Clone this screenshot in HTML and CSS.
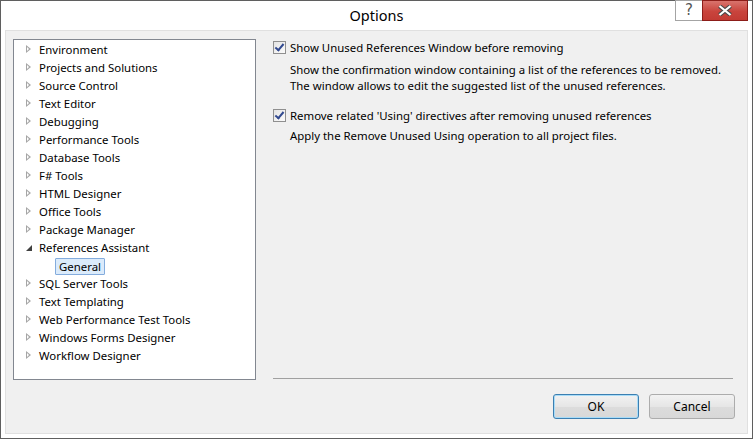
FILE: index.html
```html
<!DOCTYPE html>
<html>
<head>
<meta charset="utf-8">
<link rel="stylesheet" href="styles.css">
</head>
<body>
<div class="window">
  <div class="titlebar">
    <div></div>
    <div class="title">Options</div>
    <div class="controls">
      <div class="ctl help"><span>?</span></div>
      <div class="ctl close">
        <svg width="14" height="11" viewBox="0 0 14 11"><path d="M1.5 1 L12.5 10 M12.5 1 L1.5 10" stroke="#4a4a4a" stroke-width="4.2" fill="none"/><path d="M1.5 1 L12.5 10 M12.5 1 L1.5 10" stroke="#fff" stroke-width="2.2" fill="none"/></svg>
      </div>
    </div>
  </div>
  <div class="content">
    <div class="main">
      <div class="tree">
        <div class="row"><span class="arrow closed"></span><span class="label">Environment</span></div>
        <div class="row"><span class="arrow closed"></span><span class="label">Projects and Solutions</span></div>
        <div class="row"><span class="arrow closed"></span><span class="label">Source Control</span></div>
        <div class="row"><span class="arrow closed"></span><span class="label">Text Editor</span></div>
        <div class="row"><span class="arrow closed"></span><span class="label">Debugging</span></div>
        <div class="row"><span class="arrow closed"></span><span class="label">Performance Tools</span></div>
        <div class="row"><span class="arrow closed"></span><span class="label">Database Tools</span></div>
        <div class="row"><span class="arrow closed"></span><span class="label">F# Tools</span></div>
        <div class="row"><span class="arrow closed"></span><span class="label">HTML Designer</span></div>
        <div class="row"><span class="arrow closed"></span><span class="label">Office Tools</span></div>
        <div class="row"><span class="arrow closed"></span><span class="label">Package Manager</span></div>
        <div class="row"><span class="arrow open"></span><span class="label">References Assistant</span></div>
        <div class="row child"><span class="label selected">General</span></div>
        <div class="row"><span class="arrow closed"></span><span class="label">SQL Server Tools</span></div>
        <div class="row"><span class="arrow closed"></span><span class="label">Text Templating</span></div>
        <div class="row"><span class="arrow closed"></span><span class="label">Web Performance Test Tools</span></div>
        <div class="row"><span class="arrow closed"></span><span class="label">Windows Forms Designer</span></div>
        <div class="row"><span class="arrow closed"></span><span class="label">Workflow Designer</span></div>
      </div>
      <div class="panel">
        <div class="options">
          <div class="opt">
            <div class="check-line"><span class="checkbox checked"></span><span>Show Unused References Window before removing</span></div>
            <div class="desc">Show the confirmation window containing a list of the references to be removed.<br>The window allows to edit the suggested list of the unused references.</div>
          </div>
          <div class="opt second">
            <div class="check-line"><span class="checkbox checked"></span><span>Remove related 'Using' directives after removing unused references</span></div>
            <div class="desc">Apply the Remove Unused Using operation to all project files.</div>
          </div>
        </div>
        <div class="separator"></div>
      </div>
    </div>
    <div class="buttons">
      <button class="btn default">OK</button>
      <button class="btn">Cancel</button>
    </div>
  </div>
</div>
</body>
</html>
```
FILE: styles.css
```css
html, body {
  margin: 0;
  padding: 0;
  background: #ffffff;
}
body {
  font-family: "Noto Sans", "Open Sans", sans-serif;
  font-size: 11.4px;
  color: #000;
}
.window {
  width: 753px;
  height: 439px;
  box-sizing: border-box;
  border: 1px solid #5f5f5f;
  background: #ffffff;
  display: flex;
  flex-direction: column;
}
.titlebar {
  height: 29px;
  flex: none;
  display: grid;
  grid-template-columns: 1fr auto 1fr;
  align-items: start;
}
.title {
  font-size: 14.5px;
  line-height: 28px;
  color: #000;
}
.controls {
  justify-self: end;
  display: flex;
  margin-top: -1px;
  margin-right: 4px;
}
.ctl {
  height: 21px;
  box-sizing: border-box;
  display: flex;
  align-items: center;
  justify-content: center;
}
.help {
  width: 27px;
  border: 1px solid #a4a4a4;
  border-right: none;
  background: #ffffff;
  font-size: 15px;
  color: #555;
  font-family: "DejaVu Sans", sans-serif;
}
.help span {
  margin-top: -2px;
}
.close {
  width: 46px;
  border: 1px solid #8c1d19;
  background: linear-gradient(#d9736d, #c9443d 55%, #c23b34);
}
.content {
  flex: 1;
  margin: 0 4px 4px 4px;
  border: 1px solid #e0e0e0;
  background: #f0f0f0;
  padding: 8px 12px 0 7px;
  display: flex;
  flex-direction: column;
}
.main {
  display: flex;
  gap: 17px;
  height: 341px;
  flex: none;
}
.tree {
  width: 243px;
  flex: none;
  box-sizing: border-box;
  border: 1px solid #828790;
  background: #fff;
  padding-top: 1px;
}
.row {
  height: 18px;
  display: flex;
  align-items: center;
  padding-left: 11px;
  white-space: nowrap;
}
.row.child {
  padding-left: 41px;
}
.arrow {
  width: 13px;
  height: 18px;
  flex: none;
  position: relative;
}
.arrow.closed::before {
  content: "";
  position: absolute;
  left: 1px;
  top: 4px;
  width: 0;
  height: 0;
  border-top: 4.5px solid transparent;
  border-bottom: 4.5px solid transparent;
  border-left: 5px solid #a6a6a6;
}
.arrow.closed::after {
  content: "";
  position: absolute;
  left: 2px;
  top: 6px;
  width: 0;
  height: 0;
  border-top: 2.5px solid transparent;
  border-bottom: 2.5px solid transparent;
  border-left: 2.8px solid #ffffff;
}
.arrow.open::before {
  content: "";
  position: absolute;
  left: 1px;
  top: 6px;
  width: 0;
  height: 0;
  border-left: 6px solid transparent;
  border-bottom: 6px solid #404040;
}
.label {
  line-height: 16px;
  padding: 0 1px;
}
.label.selected {
  background: #dbebfb;
  border: 1px solid #84acdd;
  padding: 0 3px;
  line-height: 15px;
  border-radius: 1px;
}
.panel {
  flex: 1;
  display: flex;
  flex-direction: column;
}
.options {
  flex: 1;
  padding-top: 1px;
}
.check-line {
  display: flex;
  align-items: center;
  height: 15px;
  white-space: nowrap;
}
.checkbox {
  width: 13px;
  height: 13px;
  box-sizing: border-box;
  border: 1px solid #8f8f8f;
  background: linear-gradient(135deg, #e4e4e4, #fbfbfb);
  margin-right: 4px;
  flex: none;
  position: relative;
}
.checkbox.checked::after {
  content: "";
  position: absolute;
  left: 3px;
  top: 0px;
  width: 3px;
  height: 7px;
  border-right: 2px solid #31498f;
  border-bottom: 2px solid #31498f;
  transform: rotate(40deg);
}
.desc {
  padding-left: 17px;
  line-height: 16px;
  margin-top: 7px;
  white-space: nowrap;
}
.second {
  margin-top: 14px;
}
.second .desc {
  margin-top: 5px;
}
.separator {
  height: 1px;
  background: #a0a0a0;
  margin-bottom: 1px;
  margin-right: 2px;
}
.buttons {
  display: flex;
  justify-content: flex-end;
  gap: 10px;
  margin-top: 14px;
}
.btn {
  width: 86px;
  height: 25px;
  box-sizing: border-box;
  border: 1px solid #acacac;
  border-radius: 3px;
  background: linear-gradient(#f2f2f2, #e6e6e6 50%, #dcdcdc 51%, #d8d8d8);
  font-family: inherit;
  font-size: 12px;
  color: #000;
  padding: 0;
}
.btn.default {
  border: 1px solid #3c7fb1;
  box-shadow: inset 0 0 0 1px #a8dcf8;
}
```
